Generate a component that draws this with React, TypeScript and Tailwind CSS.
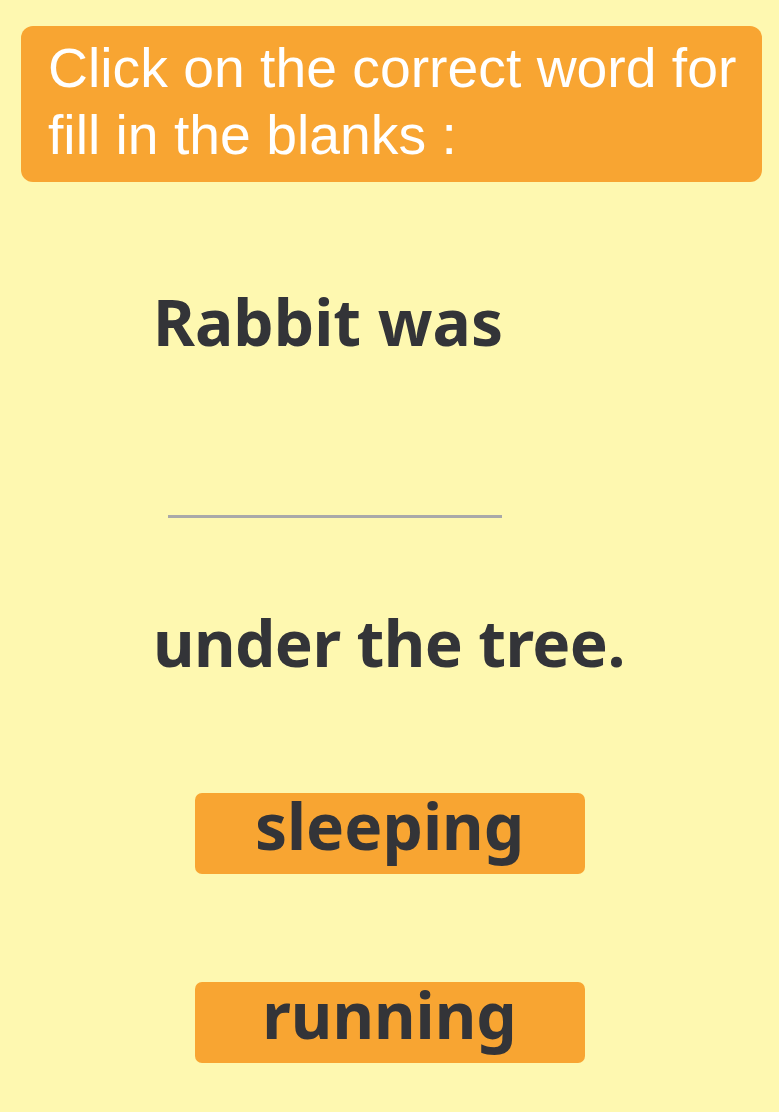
import React from "react";

export default function App() {
  return (
    <div className="min-h-[1112px] w-full bg-[#fef8b0] pt-[26px] pb-[40px]" style={{ fontFamily: '"Noto Sans", sans-serif' }}>
      <div className="ml-[21px] w-[741px] rounded-[12px] bg-[#f8a532] pl-[27px] pr-[8px] pt-[9px] pb-[13px]">
        <p className="text-[55.3px] leading-[67px] text-white" style={{ fontFamily: '"Liberation Sans", Arial, sans-serif' }}>
          Click on the correct word for fill in the blanks :
        </p>
      </div>
      <div className="pl-[153px] mt-[108px] text-[#333438] font-bold text-[64px] leading-none">
        <p>Rabbit was</p>
        <div className="ml-[15px] mt-[161px] h-[3px] w-[334px] bg-[#a9a9a9]" />
        <p className="mt-[93px] tracking-[-0.6px]">under the tree.</p>
      </div>
      <div className="mt-[118px] flex flex-col items-center gap-[108px]">
        <button className="flex h-[81px] w-[390px] items-center justify-center rounded-[7px] bg-[#f8a532] text-[64px] font-bold leading-none text-[#333438] pb-[15px]">
          sleeping
        </button>
        <button className="flex h-[81px] w-[390px] items-center justify-center rounded-[7px] bg-[#f8a532] text-[64px] font-bold leading-none text-[#333438] pb-[15px]">
          running
        </button>
      </div>
    </div>
  );
}
